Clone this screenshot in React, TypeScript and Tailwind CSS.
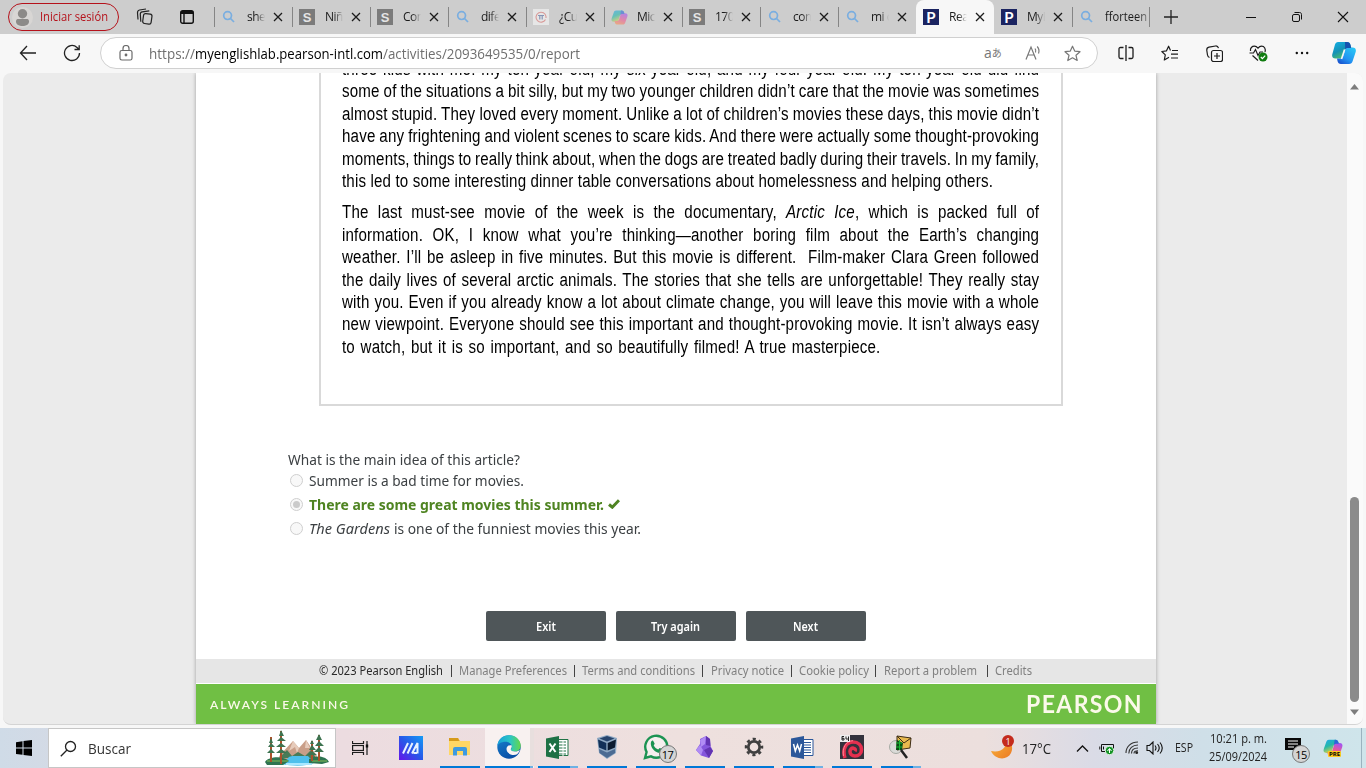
import React, { useLayoutEffect, useRef, useState } from "react";

/* Text squeezed or stretched horizontally so that it fills the width of its box. */
function Fit({ className = "", children }: { className?: string; children: React.ReactNode }) {
  const outer = useRef<HTMLSpanElement>(null);
  const inner = useRef<HTMLSpanElement>(null);
  const [scale, setScale] = useState(1);
  useLayoutEffect(() => {
    if (outer.current && inner.current && inner.current.offsetWidth > 0) {
      setScale(outer.current.clientWidth / inner.current.getBoundingClientRect().width);
    }
  }, []);
  return (
    <span ref={outer} className={"flex shrink-0 items-center " + className}>
      <span ref={inner} className="inline-block shrink-0 origin-left whitespace-nowrap" style={{ transform: `scaleX(${scale})` }}>
        {children}
      </span>
    </span>
  );
}

function Search({ className = "" }: { className?: string }) {
  return (
    <svg className={"shrink-0 " + className} width="16" height="16" viewBox="0 0 16 16" fill="none" stroke="#7aaee0" strokeWidth="1.7">
      <circle cx="6.6" cy="6.6" r="3.9" />
      <path d="M9.5 9.5 L13 13" />
    </svg>
  );
}

function SIcon() {
  return <span className="flex size-4 shrink-0 items-center justify-center bg-[#7b7b7b] font-['Liberation_Sans'] text-[13px] font-bold leading-none text-[#e4e4e4]">S</span>;
}

function PIcon() {
  return <span className="flex size-4 shrink-0 items-center justify-center bg-[#1b2461] font-['Lato'] text-[15px] font-bold leading-none text-white">P</span>;
}

function PiIcon() {
  return (
    <span className="flex size-4 shrink-0 items-center justify-center bg-[#e6e6e6]">
      <svg width="12" height="12" viewBox="0 0 12 12" fill="none">
        <path d="M10.5 8.5A5 5 0 1 1 11 5.500V7" stroke="#d99a98" strokeWidth="1.1" />
        <path d="M3 4.500H9M4.800 4.500V8.500M7.200 4.500V8.500" stroke="#8795b5" strokeWidth="1.2" />
      </svg>
    </span>
  );
}

function Copilot({ size, id, soft = false }: { size: number; id: string; soft?: boolean }) {
  return (
    <svg className={soft ? "shrink-0 opacity-60" : "shrink-0"} width={size} height={size} viewBox="0 0 24 24">
      <defs>
        <linearGradient id={id + "a"} x1="0" y1="0" x2="0.5" y2="1">
          <stop offset="0" stopColor="#1fa7ee" />
          <stop offset="0.5" stopColor="#25b8a8" />
          <stop offset="1" stopColor="#e8d640" />
        </linearGradient>
        <linearGradient id={id + "b"} x1="0.6" y1="0" x2="0.2" y2="1">
          <stop offset="0" stopColor="#a655ee" />
          <stop offset="0.5" stopColor="#ee5a92" />
          <stop offset="1" stopColor="#fa9551" />
        </linearGradient>
      </defs>
      <path d="M7 2h8c2 0 3 1 3.500 3l.5 2h-3c-2 0-3 1-3.500 3l-1.600 5c-.5 2-1.400 3-3.400 3H4C1 18 0 16 1 13L4 4.500C4.500 3 5.500 2 7 2z" fill={`url(#${id}a)`} />
      <path d="M17 22H9c-2 0-3-1-3.500-3L5 17h3c2 0 3-1 3.500-3l1.600-5c.5-2 1.400-3 3.400-3H20c3 0 4 2 3 5l-3 8.500c-.5 1.500-1.500 2.500-3 2.500z" fill={`url(#${id}b)`} />
      <path d="M14 2h1c2 0 3 1 3.500 3l.5 2h-3c-1.500 0-2.500.6-3 2z" fill="#2d65d8" />
    </svg>
  );
}

function EdgeCopilot() {
  return (
    <svg width="24" height="24" viewBox="0 0 24 24">
      <defs>
        <linearGradient id="eca" x1="0" y1="0" x2="0.6" y2="1">
          <stop offset="0" stopColor="#13b0e8" />
          <stop offset="0.55" stopColor="#1492b5" />
          <stop offset="1" stopColor="#55c65d" />
        </linearGradient>
        <linearGradient id="ecb" x1="0.8" y1="0" x2="0.1" y2="1">
          <stop offset="0" stopColor="#28c5f5" />
          <stop offset="0.6" stopColor="#2293f2" />
          <stop offset="1" stopColor="#1649c9" />
        </linearGradient>
      </defs>
      <path d="M6 1h9c2 0 3 1 3.500 3l.7 3H16c-2 0-3 1-3.500 3l-1.600 5c-.5 2-1.400 2.500-3.400 2.500H3.500C.5 17.500-.5 15.500.5 12.500L3 3.500C3.500 2 4.500 1 6 1z" fill="url(#eca)" />
      <path d="M17 23H9c-2 0-3-1-3.500-3L5 17.500h3c2 0 3-1.500 3.500-3.500l1.600-5c.5-1.500 1.400-2.500 3.400-2.500H20.500c3 0 4 2 3 5l-3 9c-.5 1.500-1.500 2.500-3.500 2.500z" fill="url(#ecb)" />
      <path d="M13 1h2c2 0 3 1 3.500 3l.7 3H16c-1.500 0-2.300.6-2.800 1.600z" fill="#1552b0" />
      <path d="M12.600 8.500L9.500 18" stroke="#f7f7f7" strokeWidth="1.600" />
    </svg>
  );
}

function Close() {
  return (
    <svg className="shrink-0" width="10" height="10" viewBox="0 0 10 10" stroke="#1c1c1c" strokeWidth="1.300">
      <path d="M1 1L9 9M9 1L1 9" />
    </svg>
  );
}

const tabs: { icon: string; label: string; active?: boolean; bar: boolean }[] = [
  { icon: "search", label: "shel", bar: true },
  { icon: "s", label: "Niño", bar: true },
  { icon: "s", label: "Con", bar: true },
  { icon: "search", label: "difer", bar: true },
  { icon: "pi", label: "¿Cuá", bar: true },
  { icon: "copilot", label: "Micr", bar: true },
  { icon: "s", label: "170", bar: true },
  { icon: "search", label: "com", bar: true },
  { icon: "search", label: "mi c", bar: true },
  { icon: "p", label: "Read", active: true, bar: false },
  { icon: "p", label: "MyE", bar: false },
];

function TabIcon({ kind }: { kind: string }) {
  if (kind === "search") return <Search />;
  if (kind === "s") return <SIcon />;
  if (kind === "p") return <PIcon />;
  if (kind === "pi") return <PiIcon />;
  return <Copilot size={17} id="tab" soft />;
}

function TabStrip() {
  return (
    <div className="flex h-[34px] shrink-0 items-center bg-[#cdcdcd]">
      <div className="ml-2 flex h-7 w-[111px] shrink-0 items-center rounded-full border border-[#b5121b]">
        <span className="ml-[3px] mr-[7px] flex size-[21px] items-center justify-center overflow-hidden rounded-full bg-[#d8d6d4]">
          <svg width="21" height="21" viewBox="0 0 21 21" fill="#8c8a88">
            <circle cx="10.500" cy="6.800" r="4.700" />
            <path d="M4 14.500c0-2 1-2.500 2.500-2.500h8c1.500 0 2.500.5 2.500 2.500 0 3-3 4.500-6.500 4.500S4 17.500 4 14.500z" />
          </svg>
        </span>
        <Fit className="h-5 w-[68px] text-[12px] text-[#b5121b]">Iniciar sesión</Fit>
      </div>
      <svg className="ml-[17px]" width="18" height="18" viewBox="0 0 18 18" fill="none" stroke="#222" strokeWidth="1.200">
        <rect x="7.200" y="5.800" width="8.500" height="10" rx="2" transform="rotate(8 11 10)" />
        <path d="M4.800 13.800L4.300 6.300c-.1-1.500.6-2.300 2-2.500l7-.9M2 11.500L1.500 5C1.400 3.300 2 2.300 3.500 2L10 1" />
      </svg>
      <svg className="ml-[25px]" width="16" height="16" viewBox="0 0 16 16" fill="none" stroke="#111" strokeWidth="1.400">
        <rect x="1.700" y="1.700" width="12.600" height="12.600" rx="2" />
        <path d="M2 3.500H14" strokeWidth="3" />
        <path d="M5 4V14" />
      </svg>
      <div className="ml-[19px] flex h-full shrink-0 items-end">
        {tabs.map((t, i) => (
          <div key={i} className={t.active ? "flex h-full w-[78px] items-center rounded-t-lg bg-[#f7f7f7]" : "flex h-full w-[78px] items-center"}>
            <span className={t.bar ? "h-5 w-px bg-[#858585]" : "h-5 w-px"} />
            <span className="ml-[6px] flex w-4 justify-center"><TabIcon kind={t.icon} /></span>
            <span className="ml-[10px] w-[18px] overflow-hidden whitespace-nowrap text-[12px] tracking-[-0.5px] text-[#1a1a1a] [mask-image:linear-gradient(to_right,black_50%,transparent)]">{t.label}</span>
            <span className="ml-[8px] flex"><Close /></span>
          </div>
        ))}
        <div className="flex h-full w-[78px] items-center">
          <span className="h-5 w-px bg-[#858585]" />
          <span className="ml-[6px]"><Search /></span>
          <Fit className="ml-[10px] h-5 w-[42px] text-[12px] text-[#1a1a1a] [mask-image:linear-gradient(to_right,black_75%,#0007)]">fforteen</Fit>
          <span className="ml-[2px] h-5 w-px bg-[#858585]" />
        </div>
      </div>
      <svg className="ml-[13px] shrink-0" width="16" height="16" viewBox="0 0 16 16" stroke="#222" strokeWidth="1.300"><path d="M8 1V15M1 8H15" /></svg>
      <svg className="ml-[66px] shrink-0" width="12" height="12" viewBox="0 0 12 12" stroke="#111" strokeWidth="1"><path d="M1 6.500H11" /></svg>
      <svg className="ml-[34px] shrink-0" width="12" height="12" viewBox="0 0 12 12" fill="none" stroke="#111"><rect x="1.500" y="3.500" width="7" height="7" rx="1.500" /><path d="M3.500 1.500H8.500C10 1.500 10.500 2.500 10.500 3.500V8.500" /></svg>
      <svg className="ml-[34px] shrink-0" width="12" height="12" viewBox="0 0 12 12" stroke="#111" strokeWidth="1.100"><path d="M1 1L11 11M11 1L1 11" /></svg>
    </div>
  );
}

const star = "M8.500 1.200l2.200 4.900 5.300.6-4 3.600 1.200 5.200-4.700-2.700-4.700 2.700 1.200-5.200-4-3.600 5.300-.6z";

function Toolbar() {
  return (
    <div className="flex h-[39px] shrink-0 items-center bg-[#f7f7f7] pb-px">
      <svg className="ml-[19px]" width="18" height="16" viewBox="0 0 18 16" fill="none" stroke="#222" strokeWidth="1.300"><path d="M8 1L1.500 8L8 15M1.500 8H17" /></svg>
      <svg className="ml-[26px]" width="18" height="18" viewBox="0 0 18 18" fill="none" stroke="#222" strokeWidth="1.300"><path d="M16.500 9A7.500 7.500 0 1 1 14 3.400L16 5.200M16.200 1.200V5.500H11.500" /></svg>
      <div className="ml-[19px] flex h-8 w-[998px] shrink-0 items-center rounded-full border border-[#d0d0d0] bg-white">
        <svg className="ml-[18px]" width="14" height="16" viewBox="0 0 14 16" fill="none" stroke="#6b6b6b" strokeWidth="1.200"><rect x="1" y="5.500" width="12" height="9.500" rx="1.800" /><path d="M4 5.500V3.500a3 3 0 0 1 6 0V5.500" /><circle cx="7" cy="10" r=".8" fill="#666" /></svg>
        <div className="ml-[16px] flex pt-px text-[14px]">
          <Fit className="h-6 w-[46px] text-[#6f6f6f]">https://</Fit>
          <Fit className="h-6 w-[188px] text-black">myenglishlab.pearson-intl.com</Fit>
          <Fit className="h-6 w-[197px] text-[#6f6f6f]">/activities/2093649535/0/report</Fit>
        </div>
        <span className="ml-[404px] flex h-5 w-[18px] items-center whitespace-nowrap text-[#777]">
          <span className="text-[14px] leading-none">a</span><span className="font-['Noto_Sans_CJK_JP'] text-[10px] leading-none">あ</span>
        </span>
        <svg className="ml-[23px]" width="17" height="16" viewBox="0 0 17 16" fill="none" stroke="#777" strokeWidth="1.200"><path d="M1 14.500L6 2L11 14.500M2.800 10H9.200M10 3.500a4 4 0 0 1 .5 4M12.200 1.500a7 7 0 0 1 1.300 7" /></svg>
        <svg className="ml-[22px]" width="17" height="17" viewBox="0 0 17 17" fill="none" stroke="#777" strokeWidth="1.200" strokeLinejoin="round"><path d={star} /></svg>
      </div>
      <svg className="ml-[20px] shrink-0" width="16" height="16" viewBox="0 0 16 16" fill="none" stroke="#1c1c1c" strokeWidth="1.300"><path d="M5.500 2.500H2.500Q1 2.500 1 4V12Q1 13.500 2.500 13.500H5.500M10.500 2.500H13.500Q15 2.500 15 4V12Q15 13.500 13.500 13.500H10.500M8 0V16" /></svg>
      <svg className="ml-[27px] shrink-0" width="18" height="17" viewBox="0 0 18 17" fill="none" stroke="#1c1c1c" strokeWidth="1.200" strokeLinejoin="round"><path d="M9.500 5.500L7.600 1.200L5.500 5.800L.8 6.500L4.300 9.900L3.300 15L8 12.200M11 5.500H17M10 9.200H17M10 13H17" /></svg>
      <svg className="ml-[27px] shrink-0" width="17" height="17" viewBox="0 0 17 17" fill="none" stroke="#1c1c1c" strokeWidth="1.200"><rect x="5.500" y="5.500" width="11" height="11" rx="2" /><path d="M11 8V14M8 11H14M3.500 12.500C2 12 1.700 11 1.500 10L.8 5.500C.6 3.500 1.500 2.500 3 2.200L9.500 1c1.500-.2 2.500.5 3 2.200" /></svg>
      <svg className="ml-[26px] shrink-0" width="20" height="17" viewBox="0 0 20 17" fill="none" stroke="#1c1c1c" strokeWidth="1.200"><path d="M1.500 6C1 3 3 1.200 5.500 1.200 7 1.200 8 2 9 3.200 10 2 11 1.200 12.500 1.200 15.500 1.200 17 4 16 7M3.500 10.500L9 15.500M.5 8H4.500L6.500 4.500L9 10.500L11 7H14" /><circle cx="14" cy="12" r="4.500" fill="#107c10" stroke="none" /><path d="M11.800 12L13.400 13.600L16.200 10.700" stroke="white" /></svg>
      <svg className="ml-[26px] shrink-0" width="14" height="4" viewBox="0 0 14 4" fill="#111"><circle cx="1.800" cy="2" r="1.200" /><circle cx="7" cy="2" r="1.200" /><circle cx="12.200" cy="2" r="1.200" /></svg>
      <span className="ml-[23px] shrink-0"><EdgeCopilot /></span>
    </div>
  );
}

const firstParagraph = [
  "three kids with me: my ten-year-old, my six-year-old, and my four-year-old. My ten-year-old did find",
  "some of the situations a bit silly, but my two younger children didn’t care that the movie was sometimes",
  "almost stupid. They loved every moment. Unlike a lot of children’s movies these days, this movie didn’t",
  "have any frightening and violent scenes to scare kids. And there were actually some thought-provoking",
  "moments, things to really think about, when the dogs are treated badly during their travels. In my family,",
];

const secondParagraph = [
  "information. OK, I know what you’re thinking—another boring film about the Earth’s changing",
  "weather. I’ll be asleep in five minutes. But this movie is different.\u00a0 Film-maker Clara Green followed",
  "the daily lives of several arctic animals. The stories that she tells are unforgettable! They really stay",
  "with you. Even if you already know a lot about climate change, you will leave this movie with a whole",
  "new viewpoint. Everyone should see this important and thought-provoking movie. It isn’t always easy",
];

function Line({ width = "w-[830px]", children }: { width?: string; children: React.ReactNode }) {
  return <div className={"h-[22.4px] whitespace-nowrap text-justify leading-[22.4px] [text-align-last:justify] [word-spacing:-1.5px] " + width}>{children}</div>;
}

function Article() {
  return (
    <div className="ml-[123px] h-[333px] w-[744px] shrink-0 overflow-hidden border-x-2 border-b-2 border-[#d9d9d9] pl-[21px]">
      <div className="-mt-[15px] origin-left scale-x-84 font-['Liberation_Sans'] text-[18px] tracking-[0.2px] text-black">
        {firstParagraph.map((l) => <Line key={l}>{l}</Line>)}
        <Line width="w-[775px]">this led to some interesting dinner table conversations about homelessness and helping others.</Line>
        <div className="h-[9px]" />
        <Line>The last must-see movie of the week is the documentary, <i>Arctic Ice</i>, which is packed full of</Line>
        {secondParagraph.map((l) => <Line key={l}>{l}</Line>)}
        <Line width="w-[641px]">to watch, but it is so important, and so beautifully filmed! A true masterpiece.</Line>
      </div>
    </div>
  );
}

function Radio({ on = false }: { on?: boolean }) {
  return (
    <span className="mr-[6px] flex size-[13px] shrink-0 items-center justify-center rounded-full border border-[#cfcfcf] bg-[#f8f8f8]">
      {on && <span className="size-[7px] rounded-full bg-[#cbcbcb]" />}
    </span>
  );
}

function Bar() {
  return <span className="h-[12px] w-px shrink-0 bg-[#444]" />;
}

function Page() {
  return (
    <div className="flex h-[651px] w-[960px] shrink-0 flex-col bg-white font-['Noto_Sans'] shadow-[0_0_4px_#0005]">
      <Article />
      <div className="ml-[92px] mt-[43px] flex flex-col text-[14px] text-[#3c4043]">
        <Fit className="h-[20px] w-[232px]">What is the main idea of this article?</Fit>
        <div className="ml-[2px] flex h-[23px] items-center"><Radio /><Fit className="h-5 w-[215px]">Summer is a bad time for movies.</Fit></div>
        <div className="ml-[2px] flex h-6 items-center text-[#4f8422]">
          <Radio on />
          <Fit className="h-5 w-[295px] font-bold">There are some great movies this summer.</Fit>
          <svg className="ml-[4px]" width="12" height="10" viewBox="0 0 12 10" fill="none" stroke="#4f8422" strokeWidth="3"><path d="M1 5.500L4.300 8.200L11 1.200" /></svg>
        </div>
        <div className="ml-[2px] flex h-6 items-center">
          <Radio />
          <Fit className="mr-[4px] h-5 w-[81px] italic">The Gardens</Fit>
          <Fit className="h-5 w-[247px]">is one of the funniest movies this year.</Fit>
        </div>
      </div>
      <div className="ml-[290px] mt-[71px] flex h-[30px] shrink-0 gap-[10px] text-[12px] font-semibold text-white">
        <button className="flex w-[120px] items-center justify-center rounded-[2px] bg-[#4f5659] pt-[2px]"><Fit className="w-[20px]">Exit</Fit></button>
        <button className="flex w-[120px] items-center justify-center rounded-[2px] bg-[#4f5659] pr-px pt-[2px]"><Fit className="w-[49px]">Try again</Fit></button>
        <button className="flex w-[120px] items-center justify-center rounded-[2px] bg-[#4f5659] pr-px pt-[2px]"><Fit className="w-[25px]">Next</Fit></button>
      </div>
      <div className="mt-[18px] flex h-6 shrink-0 items-center bg-[#e6e6e6] pl-[123px] text-[12px] text-[#808080]">
        <Fit className="mr-[8px] w-[124px] text-[#2b2b2b]">© 2023 Pearson English</Fit><Bar />
        <Fit className="ml-[7px] mr-[7px] w-[108px]">Manage Preferences</Fit><Bar />
        <Fit className="mx-[7px] w-[113px]">Terms and conditions</Fit><Bar />
        <Fit className="ml-[8px] mr-[7px] w-[73px]">Privacy notice</Fit><Bar />
        <Fit className="ml-[7px] mr-[6px] w-[70px]">Cookie policy</Fit><Bar />
        <Fit className="ml-[8px] mr-[10px] w-[93px]">Report a problem</Fit><Bar />
        <Fit className="ml-[7px] w-[37px]">Credits</Fit>
      </div>
      <div className="mt-px flex h-10 shrink-0 items-center justify-between bg-[#70bf44] pl-[14px] pr-[13px] font-['Lato'] text-[#fbf9ea]">
        <Fit className="mt-[2px] w-[140px] text-[12px] font-semibold tracking-[2px]">ALWAYS LEARNING</Fit>
        <Fit className="w-[117px] text-[25px] font-bold tracking-[1.500px]">PEARSON</Fit>
      </div>
    </div>
  );
}

function Task({ light, children }: { light?: boolean; children?: React.ReactNode }) {
  return (
    <div className="flex h-full w-[49px] shrink-0 flex-col">
      <div className="flex h-[38px] w-[39px] items-center justify-center">{children}</div>
      <div className="flex h-[2px] w-[40px]">
        <span className="flex-1 bg-[#0078d7]" />
        {light && <span className="w-2 bg-[#6eb1e4]" />}
      </div>
    </div>
  );
}

function Forest() {
  return (
    <svg width="66" height="37" viewBox="0 0 66 37">
      <path d="M16 25L29 11L35 18L42 10L53 26V29H14z" fill="#c99e88" />
      <path d="M29 11L25 21L31 17L33 23L35 18zM42 10L41 18L46 18L49 24z" fill="#e6cbbb" />
      <path d="M18 25l5-5 5 6 6-4 7 4 6-6 5 8H16z" fill="#497b57" />
      <path d="M16 34c10-3 5-8 14-8h14l6 7q-12 5-34 1z" fill="#4ec0ec" />
      <path d="M22 34h26" stroke="#a8e8ff" strokeWidth="2" />
      <path d="M1 32c4-6 19-6 24-1l-6 4H3zM45 29c9-5 18-2 20 3l-7 2-13-1z" fill="#2e7451" />
      <path d="M3 31h21M48 31h15" stroke="#68a454" strokeWidth="1.500" />
      <g stroke="#a9512a" strokeWidth="2"><path d="M7 7V32M17 1V34M48 11V31M55 5V31" /></g>
      <g fill="#3d7350">
        <path d="M7 8l2 5H5zM7 13l4 4H4zM7 19l4 4H3zM17 0l3 6h-5zM17 7l5 4h-9zM17 13l5 4H12zM17 19l6 4H12z" />
        <path d="M48 10l2 4h-4zM48 15l4 5h-7zM48 21l5 4H44zM55 4l3 6h-6zM55 11l5 5H51zM55 17l5 5H50z" />
      </g>
    </svg>
  );
}

function Taskbar() {
  return (
    <div className="flex h-10 shrink-0 items-center bg-[linear-gradient(90deg,#cfdbe7_0%,#dcd8e2_12%,#ecdce0_25%,#eee0de_50%,#ecdfdd_72%,#dadbe6_80%,#cfdfe8_88%,#cfe5eb_100%)] font-['Open_Sans']">
      <svg className="ml-4 shrink-0" width="16" height="16" viewBox="0 0 16 16"><path d="M0 2.200L6.500 1.200V7.500H0zM7.500 1.100L16 0V7.500H7.500zM0 8.500H6.500V14.800L0 13.900zM7.500 8.500H16V16L7.500 14.900z" /></svg>
      <div className="ml-4 flex h-10 w-72 shrink-0 items-center border border-[#c6c6c6] bg-white">
        <svg className="ml-[11px]" width="17" height="17" viewBox="0 0 17 17" fill="none" stroke="#222" strokeWidth="1.300"><circle cx="10.500" cy="6.500" r="5" /><path d="M7 10L.8 16.200" /></svg>
        <Fit className="ml-[11px] w-[43px] text-[14px] text-[#333]">Buscar</Fit>
        <span className="ml-[133px]"><Forest /></span>
      </div>
      <svg className="ml-4 shrink-0" width="17" height="16" viewBox="0 0 17 16" fill="none" stroke="#1c1c1c" strokeWidth="1.200"><path d="M.5 1V3.500H11.500V1M.5 15V12.500H11.500V15M15 1V15" /><rect x=".6" y="5.500" width="10.800" height="5" /><rect x="13.800" y="4.500" width="2.400" height="3" fill="#111" stroke="none" /></svg>
      <svg className="ml-[30px] shrink-0" width="24" height="24" viewBox="0 0 24 24">
        <defs><linearGradient id="asus" x1="0" y1="1" x2="1" y2="0"><stop stopColor="#6514e9" /><stop offset=".5" stopColor="#2858e9" /><stop offset="1" stopColor="#159bf5" /></linearGradient></defs>
        <path d="M0 0H24V24H0z" fill="url(#asus)" />
        <path d="M4 17.500L9 7M8.500 17.500L13.500 7M13 17.500L18.500 7V17.500M18 17H14.500" fill="none" stroke="#e6f1ff" strokeWidth="2" />
      </svg>
      <div className="ml-[17px] flex h-full shrink-0">
        <div className="flex h-full w-[45px] flex-col">
          <div className="flex h-[38px] w-10 items-center justify-center">
            <svg width="22" height="20" viewBox="0 0 22 20"><path d="M0 1h9l2 3h10v14H0z" fill="#eeb42d" /><path d="M0 4H21V18H0z" fill="#ffd765" /><path d="M0 1h9l1 3H0z" fill="#d69b1c" /><path d="M4 18.500V12q0-2 2-2h10q2 0 2 2v6.500h-4V14H8v4.500z" fill="#3f9ae0" /></svg>
          </div>
          <div className="h-[2px] w-10 bg-[#0078d7]" />
        </div>
        <div className="mr-[4px] flex h-full w-[49px] flex-col bg-[#f8f1f0]">
          <div className="flex h-[38px] items-center border-r-[4px] border-[#e8dfde] pl-[12px]">
            <svg width="24" height="24" viewBox="0 0 24 24">
              <defs><linearGradient id="edg" x1="0" x2="1"><stop stopColor="#169fda" /><stop offset=".55" stopColor="#2cc6c4" /><stop offset="1" stopColor="#65d848" /></linearGradient><linearGradient id="edb" x1="0" y1="0" x2=".5" y2="1"><stop stopColor="#1683cf" /><stop offset="1" stopColor="#0b4fa6" /></linearGradient></defs>
              <circle cx="12" cy="12" r="11.700" fill="url(#edb)" />
              <path d="M.4 11C1 4 6 .3 12 .3c7 0 11.700 5 11.700 10.200 0 4-3 6-6.200 6-2 0-3.700-.8-3.700-1.800 0-.8 1-1.200 1-3C14.800 9 12 6.800 8.500 6.800 4 6.800 1.200 9 .4 11z" fill="url(#edg)" />
              <path d="M14.700 10.500c.4 1.800-.9 2.800-.9 4.100 0 1.200 1.700 2 4 2 2.400 0 4-.8 5-1.800-.3 1.800-2 4.700-4 5-5 .8-9.500-2-9.300-6 .1-2 1.700-4 5.200-3.300z" fill="#fbf4f2" />
            </svg>
          </div>
          <div className="flex h-[2px]"><span className="w-[45px] bg-[#0078d7]" /><span className="w-[3px] bg-[#6eb1e4]" /></div>
        </div>
        <Task light>
          <svg width="23" height="23" viewBox="0 0 23 23"><path d="M11 3.500H22V19.500H11z" fill="white" stroke="#217346" /><path d="M13 6H20M13 9H20M13 12H20M13 15H20M13 18H20" stroke="#217346" strokeWidth="1.200" /><path d="M17 4V20" stroke="white" /><path d="M0 2.500L13 0V23L0 20.500z" fill="#1e7145" /><path d="M3.500 7.500L9.500 16M9.500 7.500L3.500 16" stroke="white" strokeWidth="2" /></svg>
        </Task>
        <Task>
          <svg width="22" height="24" viewBox="0 0 22 24"><path d="M1 3L11 0L21 3L20 18L11 24L3 18z" fill="#8fa9c4" /><path d="M2 4.500L10.300 8V15.500L3 12.500z" fill="#123058" /><path d="M20 4.500L11.700 8V15.500L19 12.500z" fill="#0b1b31" /><path d="M3.500 3.500L11 1L18.500 3.500L11 6.500z" fill="#27446c" /><path d="M3 14L11 17.500L19 14V18L11 23L3.500 18z" fill="#4c6b93" /></svg>
        </Task>
        <Task>
          <div className="relative flex">
            <svg width="26" height="26" viewBox="0 0 26 26"><path d="M2 24l1.600-6A11 11 0 1 1 8 22.400z" fill="#f5efee" stroke="#1b9352" strokeWidth="2.400" /><path d="M8 8c1-2 2-2 2.700-.3l1 2-1 1.800c1 2 2.500 3.200 4.500 4l1.500-1.500c1 .2 2.300 1 3 1.500 0 3-3 4-5.700 2.700C10 16.500 7 12 8 8z" fill="#1b9352" /></svg>
            <span className="absolute left-[16px] top-[11px] flex size-[18px] items-center justify-center rounded-full border border-[#777] bg-[#d4d4d4] text-[11px] leading-none tracking-[-.5px] text-black">17</span>
          </div>
        </Task>
        <Task>
          <svg width="17" height="22" viewBox="0 0 17 22"><path d="M10 0L14 3L14.500 10L17 15L13 22L5 19.500L0 14L4 8V3z" fill="#8456dc" /><path d="M10 0L4 4L5 11L9 8zM0 14L4 9L7 14L5 19.500z" fill="#b08cf4" /><path d="M10 0L14 3L14.500 10L10 9zM8 14L14 11L17 15L13 22z" fill="#6234b2" /></svg>
        </Task>
        <Task>
          <svg width="20" height="20" viewBox="0 0 20 20" fill="none" stroke="#3f3f3f"><circle cx="10" cy="10" r="5.700" strokeWidth="2.800" /><circle cx="10" cy="10" r="8" strokeWidth="2.500" strokeDasharray="3.140 3.140" strokeDashoffset="1.570" /></svg>
        </Task>
        <Task light>
          <svg width="23" height="23" viewBox="0 0 23 23"><path d="M11 3.500H22V19.500H11z" fill="white" stroke="#2b579a" /><path d="M13 6.500H20M13 9H20M13 11.500H20M13 14H20M13 16.500H20" stroke="#2b579a" strokeWidth="1.200" /><path d="M0 2.500L13 0V23L0 20.500z" fill="#2b579a" /><path d="M2.500 8L4.300 15L6.500 9L8.700 15L10.500 8" fill="none" stroke="white" strokeWidth="1.500" /></svg>
        </Task>
        <Task>
          <svg width="24" height="24" viewBox="0 0 24 24">
            <path d="M0 0H24V24H0z" fill="#33323c" />
            <path d="M5 23C2 14 6 7 13 7c5.500 0 8.500 3.500 8.500 7.500 0 4-3 6.500-6.500 6.500-3 0-5-2-5-4.500 0-2.200 1.800-3.500 3.500-3.300 1.700.2 2.300 1.800 1.500 3" fill="none" stroke="#e5304f" strokeWidth="3.600" />
            <path d="M3.500 21C2 13 6 5.800 13 5.700" fill="none" stroke="#ff8798" />
            <path d="M0 0H10V7H0z" fill="#eee" /><path d="M4 1.500H2V5H4V3.300H2M6 1.500V4H8.500M8.500 1.500V6" fill="none" stroke="#222" />
          </svg>
        </Task>
        <Task light>
          <svg width="24" height="24" viewBox="0 0 24 24"><circle cx="7" cy="12" r="6.500" fill="#dadbd8" stroke="#a6aaa4" /><path d="M8 1L22 3L21 13L8 15z" fill="#e8b94e" stroke="#3d2d16" /><path d="M8 5L14 8L13 15H7z" fill="#074d14" /><path d="M8 1L15 8L22 3" fill="none" stroke="#3d2d16" /><path d="M7 8H13M7 12H13M10.500 5V15" stroke="#18b735" /><path d="M12 15L18 23" stroke="#222" strokeWidth="2.500" /></svg>
        </Task>
      </div>
      <div className="relative ml-[61px] h-[26px] w-[24px] shrink-0">
        <svg width="24" height="26" viewBox="0 0 24 26"><defs><linearGradient id="moon" x1="0" y1="0" x2="1" y2="1"><stop stopColor="#f8b73e" /><stop offset="1" stopColor="#ec7923" /></linearGradient></defs><path d="M14 3c3 9-3 15-14 13 4 9 16 10 20 2 3-6 0-13-6-15z" fill="url(#moon)" /></svg>
        <span className="absolute left-[11px] top-0 flex size-[12px] items-center justify-center rounded-full bg-[#c42b1c] text-[9px] leading-none text-white">1</span>
      </div>
      <Fit className="ml-[7px] w-[29px] text-[14px] text-[#222]">17°C</Fit>
      <svg className="ml-[25px] shrink-0" width="13" height="9" viewBox="0 0 13 9" fill="none" stroke="#111" strokeWidth="1.300"><path d="M1 7.500L6.500 2L12 7.500" /></svg>
      <svg className="ml-[10px] shrink-0" width="16" height="14" viewBox="0 0 16 14" fill="none" stroke="#111"><path d="M2.500 3.500H14.500V10.500H2.500zM4.500 5.500V8.500M.8 5.500V8.500" /><circle cx="10.500" cy="9.500" r="4.200" fill="#159326" stroke="#d8f0db" /><path d="M10.500 12V8M8.500 10L10.500 7.500L12.500 10" stroke="white" /></svg>
      <svg className="ml-[10px] shrink-0" width="14" height="14" viewBox="0 0 14 14" fill="none" stroke="#333" strokeWidth="1.100"><path d="M1 12C1 5.500 6 1 13 1M3.800 12.500C3.800 7.500 7.500 4 13 4M6.500 12.500C6.500 9 9 7 13 7M9 12.500C9 10.500 10.500 9.800 13 9.800" /><circle cx="11.700" cy="11.700" r="1.400" fill="#222" stroke="none" /></svg>
      <svg className="ml-[7px] shrink-0" width="17" height="14" viewBox="0 0 17 14" fill="none" stroke="#111" strokeWidth="1.100"><path d="M1 4.500H3.500L7 1V13L3.500 9.500H1zM9 4.500q2 2.500 0 5M11.500 3q3.500 4 0 8M14 1.500q4.500 5.500 0 11" /></svg>
      <Fit className="ml-[12px] w-[18px] text-[12px] text-[#222]">ESP</Fit>
      <div className="ml-[16px] flex shrink-0 flex-col items-center text-[12px] leading-[18px] text-[#222]">
        <Fit className="h-[18px] w-[57px]">10:21 p. m.</Fit>
        <Fit className="h-[18px] w-[58px]">25/09/2024</Fit>
      </div>
      <div className="relative ml-[18px] h-[26px] w-[25px] shrink-0">
        <svg width="17" height="20" viewBox="0 0 17 20"><path d="M0 3H16V15H12V19L8 15H0z" fill="#090909" /><path d="M3 6H13M3 9H13M3 12H9" stroke="white" /></svg>
        <span className="absolute left-[7px] top-[10px] flex size-[18px] items-center justify-center rounded-full border border-[#777] bg-[#d4d4d4] text-[11px] leading-none tracking-[-.5px] text-black">15</span>
      </div>
      <div className="relative ml-[13px] flex shrink-0"><Copilot size={20} id="tray" /><span className="absolute left-[5px] top-[13px] rounded-[1px] bg-[#ffc91f] px-px text-[6px] font-bold leading-[6px] text-black">PRE</span></div>
      <span className="ml-[18px] h-full w-px shrink-0 bg-[#9bb3bf]" />
    </div>
  );
}

export default function App() {
  return (
    <div className="flex h-[768px] w-[1366px] flex-col overflow-hidden bg-[#f7f7f7] font-['Open_Sans']">
      <TabStrip />
      <Toolbar />
      <div className="mx-[3px] mb-[3px] flex h-[652px] shrink-0 overflow-hidden rounded-lg border-b border-[#d4d4d4] bg-[#ebebeb]">
        <div className="flex h-full flex-1 justify-start pl-[193px]"><Page /></div>
        <div className="flex h-full w-[16px] shrink-0 flex-col items-center bg-[#fafafa] pr-[2px] text-[#7d7d7d]">
          <svg className="mt-[11px]" width="9" height="6" viewBox="0 0 9 6" fill="currentColor"><path d="M0 5.500L4.500 0L9 5.500z" /></svg>
          <div className="mt-[407px] h-[205px] w-[9px] rounded-full bg-[#8b8b8b]" />
          <svg className="mt-[7px]" width="9" height="6" viewBox="0 0 9 6" fill="currentColor"><path d="M0 .5L4.500 6L9 .5z" /></svg>
        </div>
      </div>
      <Taskbar />
    </div>
  );
}
